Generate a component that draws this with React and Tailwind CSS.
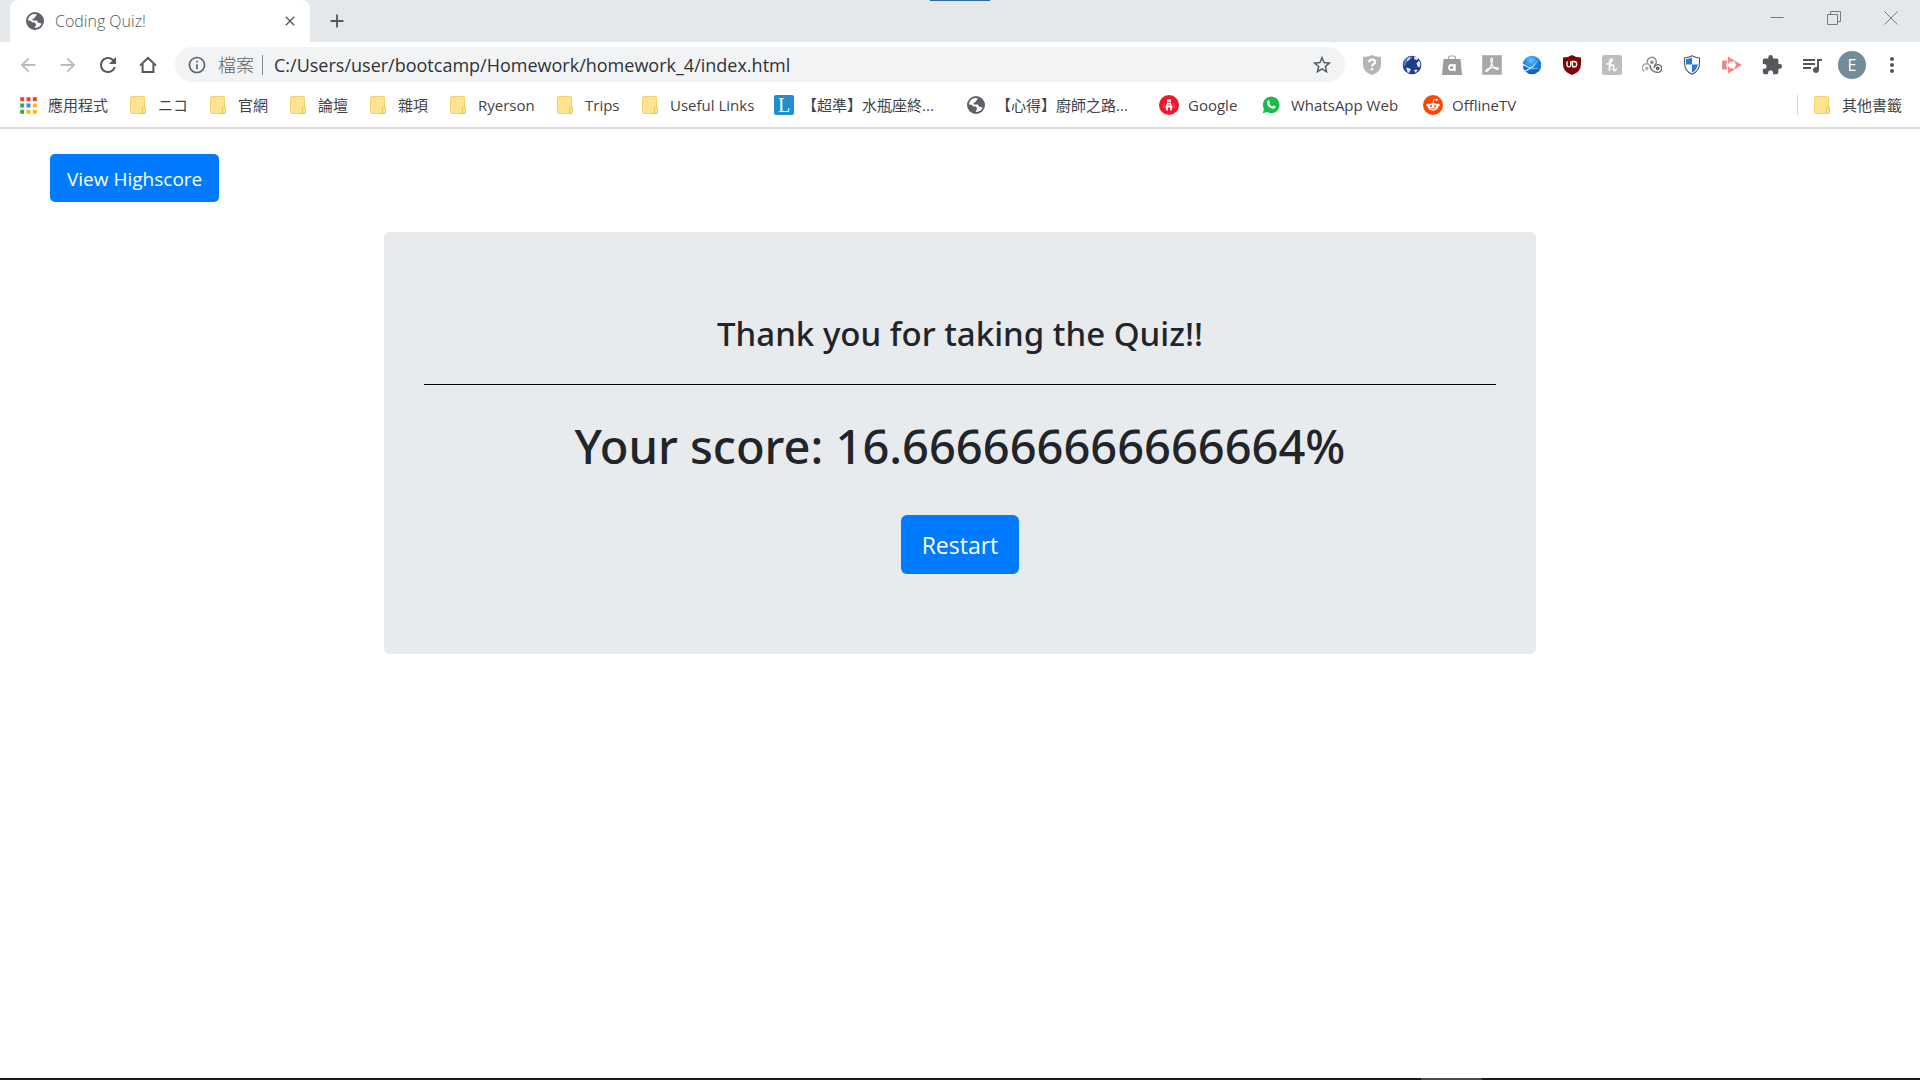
import React from "react";
import {
  MdArrowBack,
  MdArrowForward,
  MdRefresh,
  MdOutlineInfo,
  MdStarBorder,
  MdExtension,
  MdQueueMusic,
  MdMoreVert,
  MdClose,
  MdAdd,
} from "react-icons/md";

function HomeIcon() {
  return (
    <svg viewBox="0 0 20 20" className="size-5" fill="none" stroke="#54585d" strokeWidth="2">
      <path d="M2 10.6 10 3l8 7.600" />
      <path d="M4.600 9v8h10.800V9" />
    </svg>
  );
}

function GlobeIcon() {
  return (
    <svg viewBox="0 0 18 18" className="size-[18px] shrink-0">
      <circle cx="9" cy="9" r="9" fill="#5f6368" />
      <path
        d="M2 8.500C2.300 5 4.800 2.400 8.200 2.100l2.300.2c.3 1-.2 1.700-1.200 2.100L8.500 6 6.300 7.300l.3 1.200h4.200l1.300 2.200 1.700.2 1.900.8C14.700 14 12.300 15.800 9.400 16c-1-.6-.8-1.500.3-2l.4-2-1.600-1.500-2.300-.3L4.500 8.700z"
        fill="#fff"
      />
    </svg>
  );
}

function AppsIcon() {
  const colors = ["#ea4335", "#ea4335", "#ea4335", "#34a853", "#4285f4", "#fbbc05", "#34a853", "#fbbc05", "#fbbc05"];
  return (
    <svg viewBox="0 0 17 17" className="size-[17px]">
      {colors.map((c, i) => (
        <rect key={i} x={(i % 3) * 6.3 + 0.2} y={Math.floor(i / 3) * 6.3 + 0.2} width="4" height="4" fill={c} />
      ))}
    </svg>
  );
}

function FolderIcon() {
  return (
    <svg viewBox="0 0 16 18" className="h-[18px] w-4">
      <path d="M1.500.5h12a1 1 0 0 1 1 1V17.500h-13a1 1 0 0 1-1-1v-15a1 1 0 0 1 1-1z" fill="#ffe48f" stroke="#f3d36b" />
      <path d="M12.500 17.500v-5.500q0-1 1.500-1t1.500 1v4.500q0 1-1 1z" fill="#ffe693" stroke="#e9c65a" />
    </svg>
  );
}

function LetterTile() {
  return (
    <span className="flex size-5 items-center justify-center rounded-xs bg-[#1f8fce] font-[Liberation_Serif,serif] text-xl leading-5 text-white">
      L
    </span>
  );
}

function RedFigureIcon() {
  return (
    <svg viewBox="0 0 20 20" className="size-5">
      <circle cx="10" cy="10" r="10" fill="#f3132c" />
      <path d="m8 5 1-1.200 1 1 1-1 1 1.200-.3 2.500L13.500 12l-.8 3.500h-1.600V12.500H9v3H7.300L6.500 12l1.800-4.500z" fill="#fff" />
      <path d="M8.800 7.500h2.400M8.400 10h3.200" stroke="#f3132c" strokeWidth=".8" />
      <path d="M5.500 8 4.500 13M14.500 8l1 5" stroke="#ff7a88" strokeWidth=".8" />
    </svg>
  );
}

function WhatsAppIcon() {
  return (
    <svg viewBox="0 0 20 20" className="size-[18px]">
      <path d="M.8 19.200 2.200 14.400A9.200 9.200 0 1 1 5.700 17.900z" fill="#16bd47" />
      <path
        d="M6.600 5.200c.5-.5 1.200-.5 1.500.1l.8 1.700c.2.500-.8 1.300-.7 1.700.5 1.200 1.700 2.400 3 2.900.5.200 1.200-1.200 1.700-1l1.900.9c.5.300.4 1-.1 1.600-.9 1.100-2.300 1.300-3.700.8-2.500-.9-4.700-3-5.400-5.400-.3-1.300 0-2.400 1-3.300z"
        fill="#fff"
      />
    </svg>
  );
}

function RedditIcon() {
  return (
    <svg viewBox="0 0 20 20" className="size-5">
      <circle cx="10" cy="10" r="10" fill="#ff4500" />
      <ellipse cx="10" cy="11.800" rx="5.200" ry="3.900" fill="#fff" />
      <circle cx="4.800" cy="9.900" r="1.500" fill="#fff" />
      <circle cx="15.200" cy="9.900" r="1.500" fill="#fff" />
      <path d="m10 8.200.9-4 2.600.6" fill="none" stroke="#fff" strokeWidth=".9" />
      <circle cx="13.800" cy="4.900" r="1.100" fill="#fff" />
      <circle cx="8" cy="11" r="1" fill="#ff4500" />
      <circle cx="12" cy="11" r="1" fill="#ff4500" />
      <path d="M7.800 13.400q2.200 1.400 4.400 0" fill="none" stroke="#ff4500" strokeWidth=".8" />
    </svg>
  );
}

function ShieldQuestionIcon() {
  return (
    <svg viewBox="0 0 20 20" className="size-5">
      <path d="M10 0q4 2 9 2v8q0 7-9 10Q1 17 1 10V2q5 0 9-2z" fill="#b5b5b5" />
      <path d="M7.200 7.300q0-2.800 2.900-2.800T13 7q0 1.400-1.500 2.200T10 11.500" fill="none" stroke="#fff" strokeWidth="2.200" />
      <circle cx="10" cy="14.300" r="1.300" fill="#fff" />
    </svg>
  );
}

function EarthIcon() {
  return (
    <svg viewBox="0 0 20 20" className="size-5">
      <circle cx="10" cy="10" r="9.300" fill="#1d3f86" />
      <path d="M2 6q3-5 7-5 2 1 1 2.500L7 5q-.5 2-2.500 2.500L4 10l-2.700 1Q.8 8 2 6z" fill="#5577b8" />
      <path d="m12 1.500 3 .5 1.500 1.500-1.500 1.500-2.500-.5zM16.500 6l1.500.8.5 3-1.200 2.700-1.800-1-1-3zM4 12.500l3 .7 2 1-1.200 2L7.500 18 5.500 17zM12 15l2.500-.5 1.200 1-2.500 2.200z" fill="#dfe9f7" />
      <path d="m6 3 2.500-.8L7 5 4.500 6z" fill="#dfe9f7" />
    </svg>
  );
}

function BagIcon() {
  return (
    <svg viewBox="0 0 20 20" className="size-5">
      <path d="M6.500 6V3q0-2 2-2h3q2 0 2 2v3" fill="none" stroke="#a6a6a6" strokeWidth="1.200" />
      <path d="M1.500 4h17L20 20H0z" fill="#9b9b9b" />
      <circle cx="9.600" cy="12.500" r="2.500" fill="none" stroke="#fff" strokeWidth="1.800" />
      <path d="M12.800 9v7.200" stroke="#fff" strokeWidth="1.900" />
    </svg>
  );
}

function AcrobatIcon() {
  return (
    <svg viewBox="0 0 20 20" className="size-5">
      <rect width="20" height="20" fill="#a9a9a9" />
      <rect x=".5" y=".5" width="19" height="19" fill="none" stroke="#bcbcbc" />
      <path
        d="M9.600 3.200c1.400 0 1 3.400-.2 6.600-1.300 3.300-3.400 6.600-5 6.600-1.500 0-.5-2.300 3.600-3.300 4-.9 8.500-.8 8.500.6 0 1.300-3.200.7-5.300-1.800-1.900-2.400-3.300-8.700-1.600-8.700z"
        fill="none"
        stroke="#fff"
        strokeWidth="1.200"
      />
    </svg>
  );
}

function BlueSphereIcon() {
  return (
    <svg viewBox="0 0 20 20" className="size-5">
      <defs>
        <radialGradient id="sphere" cx="45%" cy="25%" r="75%">
          <stop offset="0" stopColor="#6cc6ff" />
          <stop offset=".5" stopColor="#1686ea" />
          <stop offset="1" stopColor="#0758bd" />
        </radialGradient>
      </defs>
      <circle cx="10" cy="10" r="9.300" fill="url(#sphere)" />
      <path d="M1 8.500q7 5.500 18 5-10 1.500-18-3.500zM3 15.500Q12 12 16.500 4q-4 9-13 12.500z" fill="#fff" />
      <path d="M0 8.500 2 10 0 12zM20 8.500 18.300 10l1.700 1.500z" fill="#fff" />
    </svg>
  );
}

function UblockIcon() {
  return (
    <svg viewBox="0 0 20 20" className="size-5">
      <path d="M10 0q4 2.500 9 2.500V9q0 8-9 11Q1 17 1 9V2.500Q6 2.500 10 0z" fill="#7f0206" />
      <path d="M5 6.200v4q0 1.700 1.800 1.700t1.900-1.700v-4" fill="none" stroke="#fff" strokeWidth="1.400" />
      <path d="M10.200 6.500h1.800a2.700 2.700 0 0 1 0 5.400h-1.200z" fill="none" stroke="#fff" strokeWidth="1.400" />
    </svg>
  );
}

function HoneyIcon() {
  return (
    <svg viewBox="0 0 20 20" className="size-5">
      <rect width="20" height="20" rx="2.500" fill="#bdbdbd" />
      <path
        d="M5 9q3 .2 4.500-2.500T9.500 4Q7.500 4 7.500 9v6.500M7.600 12q1.400-2.500 3-2.300 1.400.3 1 2.600-.6 3.500.9 3.300 1.200-.2 1.900-1.600"
        fill="none"
        stroke="#fff"
        strokeWidth="1.600"
        strokeLinecap="round"
      />
    </svg>
  );
}

function CirclesIcon() {
  return (
    <svg viewBox="0 0 20 20" className="size-5" fill="none" strokeWidth="1.400">
      <path d="M2.500 16.300A4 4 0 1 1 8.300 12.500" stroke="#a5a5a5" />
      <path d="M5.600 8A4.400 4.400 0 1 1 12.300 10.400" stroke="#8c8c8c" />
      <path d="M8 10.500Q9 17 15 17.300A3.900 3.900 0 1 0 12 13" stroke="#6a6a6a" />
      <circle cx="10" cy="7.300" r="1.100" stroke="#888" />
      <circle cx="15.700" cy="13.400" r="1.100" stroke="#555" />
      <circle cx="4.800" cy="13.400" r="1.100" stroke="#aaa" />
    </svg>
  );
}

function BlueShieldIcon() {
  return (
    <svg viewBox="0 0 20 20" className="size-5">
      <path d="M10 .8q3.500 2 7.500 2.200V8q0 8-7.500 11.300Q2.500 16 2.500 8V3Q6.500 2.800 10 .8z" fill="#fff" stroke="#4a545e" strokeWidth="1.100" />
      <path d="M10 2.500v7H4V4.200q3.500-.3 6-1.700zM10 9.500h5.800Q15 15 10 17.700z" fill="#2878d0" />
    </svg>
  );
}

function CoralArrowIcon() {
  return (
    <svg viewBox="0 0 20 20" className="size-5">
      <path d="M0 5.500h5v9H0z" fill="#fb8289" />
      <path d="M6 1.500 20 10 6 18.500z" fill="#fb8289" />
      <path d="M4 8.500h3l1-1.700h4.500l1.700 3.200-1.700 3.200H8l-1-1.700H4z" fill="#fff" />
      <circle cx="12" cy="7" r=".9" fill="#fff" />
      <circle cx="12" cy="13" r=".9" fill="#fff" />
    </svg>
  );
}

const bookmarks = [
  { label: "應用程式", icon: <AppsIcon />, width: "w-[110px]", gap: "gap-[11px]" },
  { label: "ニコ", icon: <FolderIcon />, width: "w-20", gap: "gap-3" },
  { label: "官網", icon: <FolderIcon />, width: "w-20", gap: "gap-3" },
  { label: "論壇", icon: <FolderIcon />, width: "w-20", gap: "gap-3" },
  { label: "雜項", icon: <FolderIcon />, width: "w-20", gap: "gap-3" },
  { label: "Ryerson", icon: <FolderIcon />, width: "w-[107px]", gap: "gap-3" },
  { label: "Trips", icon: <FolderIcon />, width: "w-[85px]", gap: "gap-3" },
  { label: "Useful Links", icon: <FolderIcon />, width: "w-[132px]", gap: "gap-3" },
  { label: "【超準】水瓶座終...", icon: <LetterTile />, width: "w-[193px]", gap: "gap-2" },
  { label: "【心得】廚師之路...", icon: <GlobeIcon />, width: "w-[192px]", gap: "gap-[11px]" },
  { label: "Google", icon: <RedFigureIcon />, width: "w-[103px]", gap: "gap-[9px]" },
  { label: "WhatsApp Web", icon: <WhatsAppIcon />, width: "w-[161px]", gap: "gap-[11px]" },
  { label: "OfflineTV", icon: <RedditIcon />, width: "w-[100px]", gap: "gap-[9px]" },
];

const extensions = [
  { name: "Site safety", icon: <ShieldQuestionIcon /> },
  { name: "Earth", icon: <EarthIcon /> },
  { name: "Shopping assistant", icon: <BagIcon /> },
  { name: "Acrobat", icon: <AcrobatIcon /> },
  { name: "Web proxy", icon: <BlueSphereIcon /> },
  { name: "uBlock", icon: <UblockIcon /> },
  { name: "Honey", icon: <HoneyIcon /> },
  { name: "Circles", icon: <CirclesIcon /> },
  { name: "Browser protection", icon: <BlueShieldIcon /> },
  { name: "Screen recorder", icon: <CoralArrowIcon /> },
  { name: "Extensions", icon: <MdExtension className="size-[22px] text-[#54585d]" /> },
  { name: "Media controls", icon: <MdQueueMusic className="size-6 text-[#54585d]" /> },
];

const iconButton = "flex h-[35px] w-10 shrink-0 items-center justify-center";

function TabStrip() {
  return (
    <div className="relative flex h-[42px] bg-[#e4e8eb] pl-[10px]">
      <div className="absolute top-0 left-1/2 h-px w-[60px] -translate-x-1/2 bg-[#2a6ca6]" />
      <div role="tab" aria-selected="true" className="flex w-[300px] items-center rounded-t-lg bg-white pr-2 pl-4">
        <GlobeIcon />
        <span className="ml-[11px] flex-1 text-base font-light text-[#54585d]">Coding Quiz!</span>
        <button aria-label="Close tab" className="flex size-6 items-center justify-center text-[#54585d]">
          <MdClose className="size-4" />
        </button>
      </div>
      <button aria-label="New tab" className="flex w-[54px] items-center justify-center text-[#54585d]">
        <MdAdd className="size-[22px]" />
      </button>
      <div className="ml-auto flex h-9 pr-px text-[#777b7f]">
        <button aria-label="Minimize" className="flex w-[57px] items-center justify-center">
          <svg viewBox="0 0 14 14" className="size-[14px]" stroke="currentColor">
            <path d="M.5 6.500h13" />
          </svg>
        </button>
        <button aria-label="Restore" className="flex w-[57px] items-center justify-center">
          <svg viewBox="0 0 14 14" className="size-[14px]" stroke="currentColor" fill="none">
            <path d="M.5 3.500h10v10H.5zM3.500 3V.5h10v10H11" />
          </svg>
        </button>
        <button aria-label="Close window" className="flex w-[57px] items-center justify-center">
          <svg viewBox="0 0 14 14" className="size-[14px]" stroke="currentColor">
            <path d="m.5.5 13 13M13.500.5l-13 13" />
          </svg>
        </button>
      </div>
    </div>
  );
}

function Toolbar() {
  return (
    <div className="flex items-center pt-[5px] pr-2 pl-2">
      <button aria-label="Back" className={iconButton}>
        <MdArrowBack className="size-[22px] text-[#b9bbbe]" />
      </button>
      <button aria-label="Forward" className={iconButton}>
        <MdArrowForward className="size-[22px] text-[#b9bbbe]" />
      </button>
      <button aria-label="Reload" className={iconButton}>
        <MdRefresh className="size-6 text-[#54585d]" />
      </button>
      <button aria-label="Home" className={iconButton}>
        <HomeIcon />
      </button>
      <div className="ml-[7px] flex h-[35px] flex-1 items-center rounded-full bg-[#f1f3f4] pr-3 pl-3">
        <MdOutlineInfo className="size-5 shrink-0 text-[#5f6368]" />
        <label htmlFor="address" className="ml-[11px] shrink-0 text-lg leading-6 font-light text-[#5f6368]">
          檔案
        </label>
        <span className="ml-2 h-5 w-px shrink-0 bg-[#85898d]" />
        <input
          id="address"
          type="text"
          defaultValue="C:/Users/user/bootcamp/Homework/homework_4/index.html"
          className="ml-[11px] min-w-0 flex-1 bg-transparent text-lg leading-6 text-[#2f3236] outline-none"
        />
        <button aria-label="Bookmark this page" className="shrink-0 text-[#54585d]">
          <MdStarBorder className="size-[22px]" />
        </button>
      </div>
      <div className="ml-[7px] flex">
        {extensions.map((e) => (
          <button key={e.name} aria-label={e.name} className={iconButton}>
            {e.icon}
          </button>
        ))}
        <button aria-label="Profile" className={iconButton}>
          <span className="flex size-7 items-center justify-center rounded-full bg-[#728c99] text-base text-white">E</span>
        </button>
        <button aria-label="Menu" className={iconButton}>
          <MdMoreVert className="size-6 text-[#54585d]" />
        </button>
      </div>
    </div>
  );
}

function BookmarksBar() {
  return (
    <nav className="flex h-[47px] items-center border-b-2 border-[#d9dbdd] pt-px pr-[18px] pl-5 text-[15px] whitespace-nowrap text-[#3f4347]">
      {bookmarks.map((b) => (
        <a key={b.label} href="#" className={`flex shrink-0 items-center ${b.width} ${b.gap}`}>
          {b.icon}
          <span>{b.label}</span>
        </a>
      ))}
      <a href="#" className="ml-auto flex h-5 shrink-0 items-center gap-3 border-l border-[#cfd1d4] pl-4">
        <FolderIcon />
        <span>其他書籤</span>
      </a>
    </nav>
  );
}

export default function App() {
  return (
    <div className="flex min-h-screen flex-col bg-white font-['Open_Sans','Noto_Sans_CJK_TC',sans-serif]">
      <header>
        <TabStrip />
        <Toolbar />
        <BookmarksBar />
      </header>
      <main className="flex-1 text-[#212529]">
        <div className="px-[50px] pt-[25px]">
          <button className="h-12 rounded-[5px] bg-[#007bff] px-[17px] pt-0.5 text-[19px] text-white">View Highscore</button>
        </div>
        <section className="mx-auto mt-[30px] w-3/5 rounded-md bg-[#e8ebee] px-10 py-20 text-center">
          <h3 className="font-['Noto_Sans',sans-serif] text-[33px] leading-[44px] font-medium">
            Thank you for taking the Quiz!!
          </h3>
          <hr className="mt-7 border-black" />
          <h1 className="mt-[30px] font-['Noto_Sans',sans-serif] text-[47px] leading-[62px] font-medium">
            Your score: 16.666666666666664%
          </h1>
          <button className="mt-[38px] h-[59px] rounded-md bg-[#007bff] px-[21px] pt-0.5 text-[23px] text-white">
            Restart
          </button>
        </section>
      </main>
      <footer className="h-0.5 bg-[#1b191b]">
        <div className="ml-[74%] h-full w-[61px] bg-[#4d4b4d]" />
      </footer>
    </div>
  );
}
